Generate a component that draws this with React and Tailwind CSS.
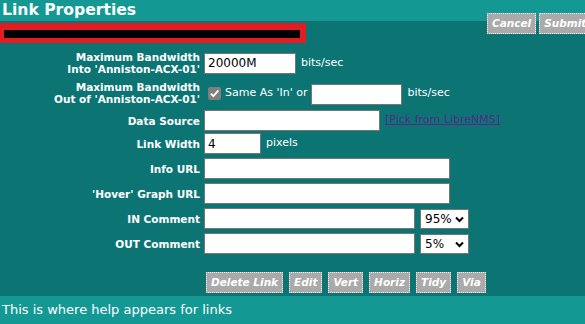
import React from 'react';

const font = { fontFamily: '"DejaVu Sans", Verdana, sans-serif' };

function Btn({ children }) {
  return (
    <span className="h-[21px] px-[4px] flex items-center bg-[#aaaaaa] border border-dotted border-white text-white font-bold italic text-[10.5px] leading-none whitespace-nowrap">
      {children}
    </span>
  );
}

function Field({ w, value }) {
  return (
    <input
      readOnly
      value={value || ''}
      className={`h-[21px] ${w} bg-white border border-[#767676] px-[3px] text-[12px] text-black outline-none`}
      style={font}
    />
  );
}

function Pick({ value }) {
  return (
    <div className="relative h-[20px] w-[49px] bg-white border border-[#767676] flex items-center pl-[4px] text-[12px] text-black">
      {value}
      <svg className="absolute right-[4px] top-[6px]" width="9" height="7" viewBox="0 0 9 7">
        <path d="M1 1.5 L4.5 5 L8 1.5" stroke="#000" strokeWidth="2" fill="none" />
      </svg>
    </div>
  );
}

function Row({ h, label, children }) {
  return (
    <div className={`flex items-center gap-[4px] ${h}`}>
      <div className="w-[200px] text-right font-bold text-[10.5px] leading-[12px] text-white shrink-0">{label}</div>
      <div className="flex items-center">{children}</div>
    </div>
  );
}

export default function App() {
  return (
    <div className="w-[585px] h-[324px] bg-[#0c7574] flex flex-col relative overflow-hidden" style={font}>
      {/* title bar */}
      <div className="h-[21px] bg-[#139894] flex items-center pl-[2px]">
        <span className="text-white font-bold text-[15.6px] leading-none">Link Properties</span>
      </div>
      <div className="absolute left-[487px] top-[13px] flex gap-[3px]">
        <Btn>Cancel</Btn>
        <Btn>Submit</Btn>
      </div>

      {/* link name box */}
      <div className="mt-[2px] w-[306px] bg-[#e31b23] pt-[7px] pb-[5px] pl-[4px] pr-[6px]">
        <div className="h-[8px] bg-black" />
      </div>

      {/* form */}
      <div className="mt-[7px] flex flex-col">
        <Row h="h-[26px]" label={<>Maximum Bandwidth<br />Into 'Anniston-ACX-01'</>}>
          <Field w="w-[92px]" value="20000M" />
          <span className="ml-[5px] text-white text-[11px]">bits/sec</span>
        </Row>
        <Row h="h-[34px]" label={<>Maximum Bandwidth<br />Out of 'Anniston-ACX-01'</>}>
          <span className="ml-[4px] w-[13px] h-[13px] bg-[#7f7f7f] rounded-[2px] flex items-center justify-center">
            <svg width="11" height="11" viewBox="0 0 11 11">
              <path d="M1.8 5.6 L4.4 8.2 L9.4 2.4" stroke="#fff" strokeWidth="1.8" fill="none" />
            </svg>
          </span>
          <span className="ml-[4px] text-white text-[11px]">Same As 'In' or</span>
          <span className="ml-[4px]"><Field w="w-[91px]" /></span>
          <span className="ml-[5px] text-white text-[11px]">bits/sec</span>
        </Row>
        <Row h="h-[21px]" label="Data Source">
          <Field w="w-[176px]" />
          <span className="ml-[5px] text-[#55288b] underline text-[11px]">[Pick from LibreNMS]</span>
        </Row>
        <Row h="h-[25px]" label="Link Width">
          <Field w="w-[57px]" value="4" />
          <span className="ml-[5px] text-white text-[11px]">pixels</span>
        </Row>
        <Row h="h-[25px]" label="Info URL">
          <Field w="w-[246px]" />
        </Row>
        <Row h="h-[25px]" label="'Hover' Graph URL">
          <Field w="w-[246px]" />
        </Row>
        <Row h="h-[25px]" label="IN Comment">
          <Field w="w-[211px]" />
          <span className="ml-[5px]"><Pick value="95%" /></span>
        </Row>
        <Row h="h-[25px]" label="OUT Comment">
          <Field w="w-[211px]" />
          <span className="ml-[5px]"><Pick value="5%" /></span>
        </Row>
      </div>

      {/* actions */}
      <div className="mt-[16px] pl-[206px] flex gap-[6px]">
        <Btn>Delete Link</Btn>
        <Btn>Edit</Btn>
        <Btn>Vert</Btn>
        <Btn>Horiz</Btn>
        <Btn>Tidy</Btn>
        <Btn>Via</Btn>
      </div>

      {/* help */}
      <div className="mt-auto h-[28px] bg-[#139894] flex items-center pl-[2px]">
        <span className="text-white text-[13px]">This is where help appears for links</span>
      </div>
    </div>
  );
}
